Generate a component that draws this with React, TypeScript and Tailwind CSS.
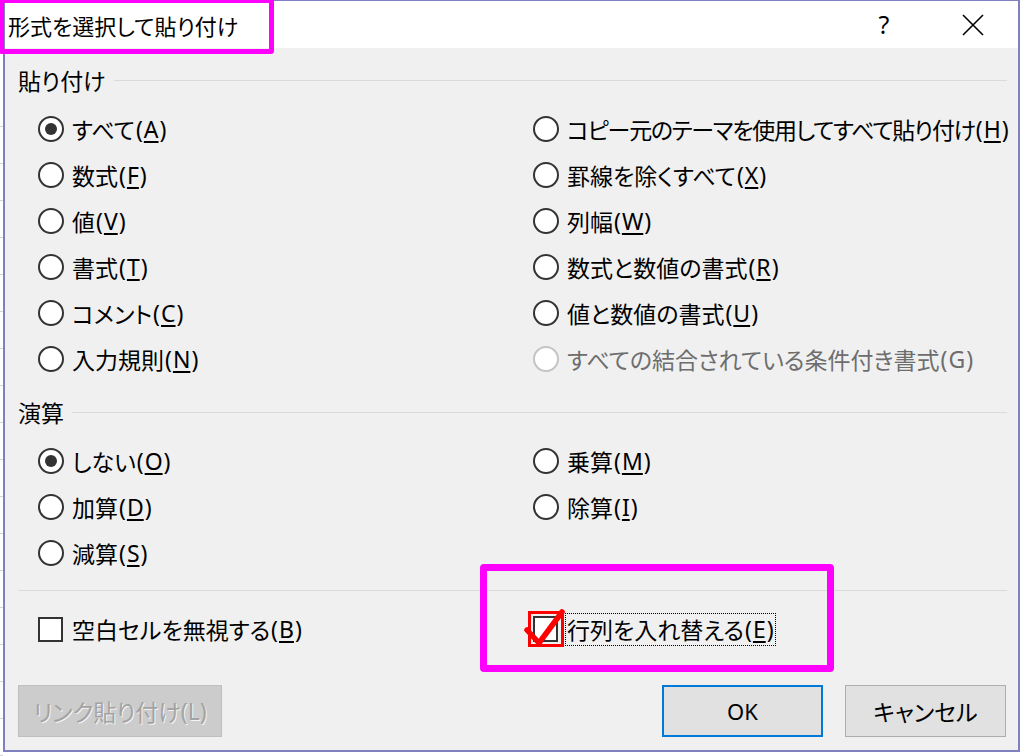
import React from "react";

const FONT = { fontFamily: '"Noto Sans CJK JP", "Noto Sans", sans-serif' };

type Opt = {
  label: string;
  key: string;
  checked?: boolean;
  disabled?: boolean;
  plain?: boolean;
  tight?: boolean;
};

const pasteLeft: Opt[] = [
  { label: "すべて", key: "A", checked: true },
  { label: "数式", key: "F" },
  { label: "値", key: "V" },
  { label: "書式", key: "T" },
  { label: "コメント", key: "C" },
  { label: "入力規則", key: "N" },
];

const pasteRight: Opt[] = [
  { label: "コピー元のテーマを使用してすべて貼り付け", key: "H", tight: true },
  { label: "罫線を除くすべて", key: "X" },
  { label: "列幅", key: "W" },
  { label: "数式と数値の書式", key: "R" },
  { label: "値と数値の書式", key: "U" },
  { label: "すべての結合されている条件付き書式", key: "G", disabled: true, plain: true },
];

const opLeft: Opt[] = [
  { label: "しない", key: "O", checked: true },
  { label: "加算", key: "D" },
  { label: "減算", key: "S" },
];

const opRight: Opt[] = [
  { label: "乗算", key: "M" },
  { label: "除算", key: "I" },
];

const Label = ({ o }: { o: Opt }) => (
  <span className={`whitespace-nowrap flex items-center ${o.disabled ? "text-[#6d6d6d]" : "text-black"}`}>
    <span className={o.tight ? "tracking-[-1.25px]" : ""}>{o.label}</span>
    <span className="font-['Noto_Sans',sans-serif] text-[23px] ml-[1px]">
      (
      <span className={`px-[1px] ${o.plain ? "" : "underline underline-offset-[3px] decoration-[1.5px]"}`}>
        {o.key}
      </span>
      )
    </span>
  </span>
);

const Radio = ({ o }: { o: Opt }) => (
  <div className="h-[46px] flex items-center gap-2">
    <span
      className={`w-[26px] h-[26px] rounded-full border-2 bg-white flex items-center justify-center shrink-0 ${
        o.disabled ? "border-[#c4c4c4]" : "border-[#333333]"
      }`}
    >
      {o.checked && <span className="w-[12px] h-[12px] rounded-full bg-[#333333]" />}
    </span>
    <Label o={o} />
  </div>
);

const Section = ({ title }: { title: string }) => (
  <div className="h-[30px] flex items-center gap-2">
    <span>{title}</span>
    <div className="flex-1 h-px bg-[#dadada]" />
  </div>
);

export default function App() {
  return (
    <div
      className="w-[1022px] h-[756px] bg-white flex text-[23px] leading-none text-black [font-feature-settings:'palt']"
      style={FONT}
    >
      <div className="w-[3px] flex flex-col pt-[90px]">
        {Array.from({ length: 18 }).map((_, i) => (
          <div key={i} className="h-[37px] border-b border-[#d4d4d4]" />
        ))}
      </div>
      <div className="relative w-[1017px] h-[752px] border-2 border-t border-[#8080c0] flex flex-col bg-[#f0f0f0]">
        {/* title bar */}
        <div className="h-[47px] bg-white flex items-center pl-[3px]">
          <span className="flex-1 text-[22px]">形式を選択して貼り付け</span>
          <span className="w-[40px] text-center text-[25px] font-['Noto_Sans',sans-serif] mr-[58px]">?</span>
          <svg width="22" height="22" viewBox="0 0 22 22" className="mr-[34px]">
            <path d="M1 1 L21 21 M21 1 L1 21" stroke="#000" strokeWidth="1.6" />
          </svg>
        </div>

        {/* body */}
        <div className="flex-1 flex flex-col pl-[13px] pr-[11px] pt-[17px]">
          <Section title="貼り付け" />
          <div className="grid grid-cols-[495px_1fr] pl-[20px] mt-[11px]">
            <div className="flex flex-col">
              {pasteLeft.map((o) => (
                <Radio key={o.label} o={o} />
              ))}
            </div>
            <div className="flex flex-col">
              {pasteRight.map((o) => (
                <Radio key={o.label} o={o} />
              ))}
            </div>
          </div>

          <div className="mt-[15px]">
            <Section title="演算" />
          </div>
          <div className="grid grid-cols-[495px_1fr] pl-[20px] mt-[11px]">
            <div className="flex flex-col">
              {opLeft.map((o) => (
                <Radio key={o.label} o={o} />
              ))}
            </div>
            <div className="flex flex-col">
              {opRight.map((o) => (
                <Radio key={o.label} o={o} />
              ))}
            </div>
          </div>

          <div className="mt-[14px] h-px bg-[#dadada]" />

          <div className="grid grid-cols-[495px_1fr] pl-[20px] mt-[15px]">
            <div className="h-[46px] flex items-center gap-[9px]">
              <span className="w-[25px] h-[25px] border-2 border-[#333333] bg-white shrink-0" />
              <Label o={{ label: "空白セルを無視する", key: "B" }} />
            </div>
            <div className="h-[46px] flex items-center gap-[7px]">
              <span className="relative w-[25px] h-[26px] border-2 border-[#333333] bg-white shrink-0">
                <span className="absolute left-[-7px] top-[-7px] w-[36px] h-[36px] border-[3px] border-[#ff0000]" />
                <svg
                  width="44"
                  height="42"
                  viewBox="0 0 44 42"
                  className="absolute left-[-11px] top-[-10px]"
                >
                  <path
                    d="M3 22 L15 35 L38 4"
                    fill="none"
                    stroke="#ff0000"
                    strokeWidth="5.5"
                    strokeLinecap="round"
                    strokeLinejoin="round"
                  />
                </svg>
              </span>
              <span className="border border-dotted border-black px-[1px] h-[33px] flex items-center">
                <Label o={{ label: "行列を入れ替える", key: "E" }} />
              </span>
            </div>
          </div>

          <div className="mt-[33px] flex items-center pr-[1px]">
            <div className="w-[204px] h-[52px] bg-[#cccccc] border border-[#bfbfbf] flex items-center justify-center text-[#a3a3a3] [text-shadow:1px_1px_0_#f4f4f4]">
              リンク貼り付け<span className="font-['Noto_Sans',sans-serif]">(L)</span>
            </div>
            <div className="flex-1" />
            <div className="w-[161px] h-[52px] bg-[#e1e1e1] border-2 border-[#0078d7] flex items-center justify-center font-['Noto_Sans',sans-serif] text-[22px]">
              OK
            </div>
            <div className="w-[161px] h-[52px] ml-[22px] bg-[#e1e1e1] border border-[#adadad] flex items-center justify-center">
              キャンセル
            </div>
          </div>
        </div>

        {/* magenta highlight boxes */}
        <div className="absolute left-[-6px] top-[-3px] w-[275px] h-[56px] border-[5px] border-[#ff00ff] rounded-[3px] pointer-events-none" />
        <div className="absolute left-[475px] top-[563px] w-[354px] h-[108px] border-[7px] border-[#ff00ff] rounded-[4px] pointer-events-none" />
      </div>
    </div>
  );
}
